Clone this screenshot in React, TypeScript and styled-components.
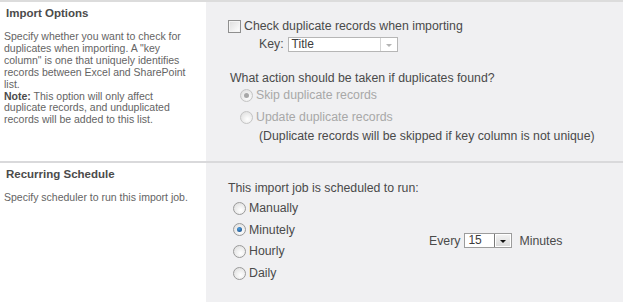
import React from 'react';
import styled, { createGlobalStyle } from 'styled-components';

const GlobalStyle = createGlobalStyle`
  html, body {
    margin: 0;
    padding: 0;
    background: #ffffff;
  }
  body {
    font-family: 'Liberation Sans', Arial, sans-serif;
  }
`;

const Page = styled.div`
  width: 623px;
  height: 302px;
  display: flex;
  flex-direction: column;
  border-top: 2px solid #dcdcdc;
  box-sizing: border-box;
  overflow: hidden;
`;

const Section = styled.div<{ $height: number; $last?: boolean }>`
  display: flex;
  height: ${({ $height }) => $height}px;
  flex-shrink: 0;
  border-bottom: ${({ $last }) => ($last ? 'none' : '2px solid #d9d9db')};
  box-sizing: border-box;
`;

const Describe = styled.div`
  width: 206px;
  flex-shrink: 0;
  padding: 4px 14px 0 4px;
  box-sizing: border-box;
  background: #ffffff;
`;

const Heading = styled.div`
  font-size: 11.5px;
  font-weight: bold;
  color: #4b4b4b;
  padding-left: 2px;
  line-height: 14px;
  margin-bottom: 11px;
`;

const Blurb = styled.div`
  font-size: 10.5px;
  line-height: 11.9px;
  color: #646464;

  b {
    color: #4b4b4b;
  }
`;

const Body = styled.div<{ $top: number }>`
  flex: 1;
  background: #f0f0f2;
  padding: ${({ $top }) => $top}px 0 0 22px;
  box-sizing: border-box;
  font-size: 12.3px;
  color: #4a4a4a;
`;

const Line = styled.div<{ $indent?: number; $mt?: number; $muted?: boolean }>`
  display: flex;
  align-items: center;
  height: 18px;
  margin-left: ${({ $indent }) => $indent ?? 0}px;
  margin-top: ${({ $mt }) => $mt ?? 0}px;
  color: ${({ $muted }) => ($muted ? '#a8a8a8' : '#4a4a4a')};
  white-space: nowrap;
`;

const Check = styled.span`
  width: 11px;
  height: 11px;
  border: 1px solid #8f8f8f;
  background: linear-gradient(135deg, #dcdcdc, #ffffff);
  box-shadow: inset 0 0 0 1px #f4f4f4;
  margin-right: 3px;
  flex-shrink: 0;
`;

const Radio = styled.span<{ $on?: boolean; $disabled?: boolean }>`
  position: relative;
  width: 11px;
  height: 11px;
  border-radius: 50%;
  border: 1px solid ${({ $disabled }) => ($disabled ? '#c4c4c4' : '#9a9a9a')};
  background: radial-gradient(circle at 60% 65%, #ffffff 0%, #dadada 100%);
  margin-right: 3px;
  flex-shrink: 0;

  &::after {
    content: '';
    display: ${({ $on }) => ($on ? 'block' : 'none')};
    position: absolute;
    left: 3px;
    top: 3px;
    width: 5px;
    height: 5px;
    border-radius: 50%;
    background: ${({ $disabled }) =>
      $disabled ? '#a7a7a7' : 'radial-gradient(circle at 40% 35%, #4fa0e0, #0f3f78)'};
  }
`;

const Label = styled.span<{ $before?: number }>`
  margin-right: 4px;
  margin-left: ${({ $before }) => $before ?? 0}px;
`;

const Select = styled.div<{ $width: number; $disabled?: boolean }>`
  display: flex;
  align-items: stretch;
  width: ${({ $width }) => $width}px;
  height: 15px;
  border: 1px solid ${({ $disabled }) => ($disabled ? '#b6b6b6' : '#9c9c9c')};
  background: #ffffff;
  box-sizing: border-box;
  font-size: 12px;
`;

const SelectText = styled.span`
  flex: 1;
  padding-left: 3px;
  line-height: 13px;
  color: #3c3c3c;
`;

const Arrow = styled.span<{ $disabled?: boolean }>`
  width: 16px;
  display: flex;
  align-items: center;
  justify-content: center;
  border-left: 1px solid ${({ $disabled }) => ($disabled ? '#d4d4d4' : '#7a7a7a')};
  background: ${({ $disabled }) =>
    $disabled ? '#ffffff' : 'linear-gradient(#f4f4f4, #d9d9d9)'};
  box-shadow: ${({ $disabled }) => ($disabled ? 'none' : 'inset 0 0 0 1px #ffffff')};

  &::after {
    content: '';
    border-left: 3px solid transparent;
    border-right: 3px solid transparent;
    border-top: 3px solid ${({ $disabled }) => ($disabled ? '#b4b4b4' : '#111111')};
    margin-top: 2px;
  }
`;

const ScheduleRow = styled.div`
  display: flex;
  align-items: center;
  margin-top: 2px;
`;

const RadioStack = styled.div`
  display: flex;
  flex-direction: column;
  gap: 3.7px;
  margin-left: 5px;
  width: 196px;
`;

const Every = styled.div`
  display: flex;
  align-items: center;
  white-space: nowrap;
`;

export default function App() {
  return (
    <>
      <GlobalStyle />
      <Page>
        <Section $height={161}>
          <Describe>
            <Heading>Import Options</Heading>
            <Blurb>
              Specify whether you want to check for duplicates when importing. A "key
              column" is one that uniquely identifies records between Excel and SharePoint
              list.
              <br />
              <b>Note:</b> This option will only affect duplicate records, and unduplicated
              records will be added to this list.
            </Blurb>
          </Describe>
          <Body $top={15}>
            <Line>
              <Check />
              Check duplicate records when importing
            </Line>
            <Line $indent={31}>
              <Label>Key:</Label>
              <Select $width={110} $disabled>
                <SelectText>Title</SelectText>
                <Arrow $disabled />
              </Select>
            </Line>
            <Line $indent={2} $mt={16}>
              What action should be taken if duplicates found?
            </Line>
            <Line $indent={12} $mt={-1} $muted>
              <Radio $on $disabled />
              Skip duplicate records
            </Line>
            <Line $indent={12} $mt={4} $muted>
              <Radio $disabled />
              Update duplicate records
            </Line>
            <Line $indent={31} $mt={1}>
              (Duplicate records will be skipped if key column is not unique)
            </Line>
          </Body>
        </Section>
        <Section $height={139} $last>
          <Describe>
            <Heading>Recurring Schedule</Heading>
            <Blurb>Specify scheduler to run this import job.</Blurb>
          </Describe>
          <Body $top={16}>
            <Line>This import job is scheduled to run:</Line>
            <ScheduleRow>
              <RadioStack>
                <Line>
                  <Radio />
                  Manually
                </Line>
                <Line>
                  <Radio $on />
                  Minutely
                </Line>
                <Line>
                  <Radio />
                  Hourly
                </Line>
                <Line>
                  <Radio />
                  Daily
                </Line>
              </RadioStack>
              <Every>
                <Label>Every</Label>
                <Select $width={48}>
                  <SelectText>15</SelectText>
                  <Arrow />
                </Select>
                <Label $before={7}>Minutes</Label>
              </Every>
            </ScheduleRow>
          </Body>
        </Section>
      </Page>
    </>
  );
}
